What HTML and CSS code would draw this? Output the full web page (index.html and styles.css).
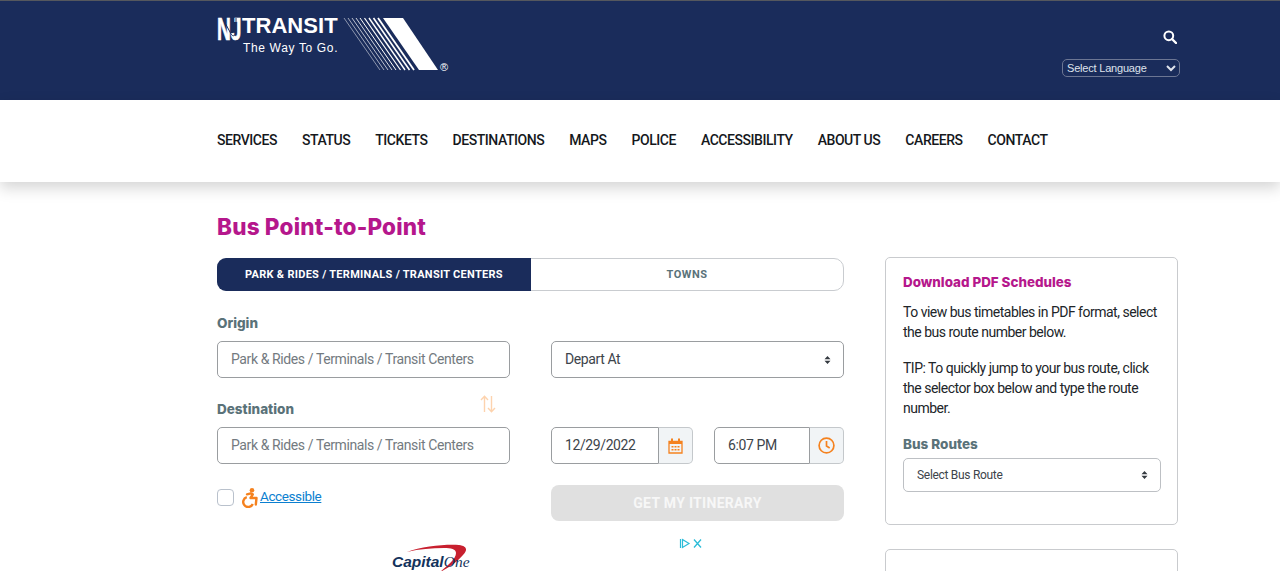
FILE: index.html
```html
<!DOCTYPE html>
<html lang="en">
<head>
<meta charset="utf-8">
<title>Bus Point-to-Point | NJ Transit</title>
<link rel="stylesheet" href="styles.css">
</head>
<body>
<header class="masthead">
  <a class="logo" href="#">
    <span class="logo-text">
      <span class="logo-top">
        <span class="logo-nj">NJ</span>
        <svg class="logo-nj-line" width="25" height="24" viewBox="0 0 25 24"><path fill="none" stroke="#1a2c5b" stroke-width="1" d="M6.500 3l6.500 12c2 5 5 5 6 0V1"/></svg>
        <span class="logo-transit">TRANSIT</span>
      </span>
      <span class="logo-tag">The Way To Go.</span>
    </span>
    <svg class="logo-stripes" width="96" height="54" viewBox="0 0 96 54">
      <g fill="none" stroke="#fff">
        <path stroke-width=".5" d="M1 1 37 53"/>
        <path stroke-width=".6" d="M5 1 41 53"/>
        <path stroke-width=".7" d="M9 1 45 53"/>
        <path stroke-width=".8" d="M13 1 49 53"/>
        <path stroke-width="1" d="M17 1 53 53"/>
        <path stroke-width="1.200" d="M21.500 1 57.500 53"/>
        <path stroke-width="1.400" d="M26 1 62 53"/>
        <path stroke-width="1.600" d="M30.500 1 66.500 53"/>
        <path stroke-width="1.800" d="M35 1 71 53"/>
      </g>
      <path fill="#fff" d="M40 1H60L95 53H76Z"/>
    </svg>
    <span class="logo-reg">®</span>
  </a>
  <div class="tools">
    <svg class="search-icon" width="14" height="14" viewBox="0 0 14 14"><circle cx="5.800" cy="5.800" r="4.400" fill="none" stroke="#fff" stroke-width="2"/><path d="M9 9l4 4" stroke="#fff" stroke-width="2.400" stroke-linecap="round"/></svg>
    <select class="lang"><option>Select Language</option></select>
  </div>
</header>
<nav class="mainnav">
  <a href="#">SERVICES</a><a href="#">STATUS</a><a href="#">TICKETS</a><a href="#">DESTINATIONS</a><a href="#">MAPS</a><a href="#">POLICE</a><a href="#">ACCESSIBILITY</a><a href="#">ABOUT US</a><a href="#">CAREERS</a><a href="#">CONTACT</a>
</nav>
<div class="page">
  <main class="content">
    <h1 class="title">Bus Point-to-Point</h1>
    <div class="tabs">
      <a class="tab tab-on" href="#">PARK &amp; RIDES / TERMINALS / TRANSIT CENTERS</a>
      <a class="tab tab-off" href="#">TOWNS</a>
    </div>
    <form class="trip">
      <div class="field">
        <label class="lbl">Origin</label>
        <input class="ctl" placeholder="Park &amp; Rides / Terminals / Transit Centers">
      </div>
      <div class="field field-end">
        <div class="select-wrap">
          <select class="ctl ctl-select"><option>Depart At</option></select>
          <svg class="caret" width="7" height="10" viewBox="0 0 7 10"><path fill="#343a40" d="M3.500 1 6.500 4.200H.5ZM.5 5.800h6L3.500 9Z"/></svg>
        </div>
      </div>
      <div class="field">
        <div class="lbl-row">
          <label class="lbl">Destination</label>
          <svg class="swap" width="16" height="18" viewBox="0 0 16 18"><path fill="none" stroke="#fdd3ae" stroke-width="1.400" d="M4.500 17V1.500M1 5l3.500-3.800L8 5M11.500 1v15.500M8 13l3.500 3.800L15 13"/></svg>
        </div>
        <input class="ctl" placeholder="Park &amp; Rides / Terminals / Transit Centers">
      </div>
      <div class="field field-end when">
        <div class="group group-date">
          <input class="ctl ctl-join" value="12/29/2022">
          <span class="addon">
            <svg width="15" height="16" viewBox="0 0 15 16"><path fill="none" stroke="#f5821f" stroke-width="1.300" d="M1 3.500h13v11.500H1Z"/><path fill="#f5821f" d="M1 3h13v3H1ZM3 .5h2v3H3ZM10 .5h2v3h-2ZM3.500 8h2v1.500h-2ZM6.500 8h2v1.500h-2ZM9.500 8h2v1.500h-2ZM3.500 11h2v1.500h-2ZM6.500 11h2v1.500h-2ZM9.500 11h2v1.500h-2Z"/></svg>
          </span>
        </div>
        <div class="group group-time">
          <input class="ctl ctl-join" value="6:07 PM">
          <span class="addon">
            <svg width="17" height="17" viewBox="0 0 17 17"><circle cx="8.500" cy="8.500" r="7.400" fill="none" stroke="#f5821f" stroke-width="1.700"/><path fill="none" stroke="#f5821f" stroke-width="1.700" d="M8.500 4v5l3.200 2"/></svg>
          </span>
        </div>
      </div>
      <div class="access">
        <input class="check" type="checkbox">
        <svg class="wheel" width="18" height="20" viewBox="0 0 18 20"><circle cx="11" cy="2.300" r="2.300" fill="#f5821f"/><path fill="none" stroke="#f5821f" stroke-width="2.400" stroke-linejoin="round" stroke-linecap="round" d="M6 6.300 9.800 5.300 11.800 6.300 9.500 10H15.500L14.800 16.500"/><path fill="none" stroke="#f5821f" stroke-width="2.400" d="M5.800 9.200a5 5 0 1 0 6 6.800"/></svg>
        <a class="access-link" href="#">Accessible</a>
      </div>
      <button class="go" type="button" disabled>GET MY ITINERARY</button>
    </form>
    <div class="ad">
      <div class="ad-logo">
        <svg class="swoosh" width="60" height="30" viewBox="0 0 60 30"><path fill="#c8202f" d="M0 8C15 2 40 0 52 1c8 1 9 5 4 10-5 6-14 13-23 17 7-6 16-13 16-19 0-4-5-5-12-5C25 4 12 5 0 8Z"/></svg>
        <span class="ad-cap">Capital</span><span class="ad-one">One</span>
      </div>
      <svg class="ad-choice" width="24" height="11" viewBox="0 0 24 11"><path fill="none" stroke="#2bbcd8" stroke-width="1.200" d="M1.500 1v9M3.500 1.500 10 5.500 3.500 9.500Z"/><path fill="none" stroke="#2bbcd8" stroke-width="1.300" d="M15 1.500l7 8M22 1.500l-7 8"/></svg>
    </div>
  </main>
  <aside class="side">
    <section class="card card-pdf">
      <h2 class="card-title">Download PDF Schedules</h2>
      <p class="card-text">To view bus timetables in PDF format, select the bus route number below.</p>
      <p class="card-text">TIP: To quickly jump to your bus route, click the selector box below and type the route number.</p>
      <label class="lbl lbl-side">Bus Routes</label>
      <div class="select-wrap">
        <select class="ctl ctl-select ctl-small"><option>Select Bus Route</option></select>
        <svg class="caret" width="7" height="10" viewBox="0 0 7 10"><path fill="#343a40" d="M3.500 1 6.500 4.200H.5ZM.5 5.800h6L3.500 9Z"/></svg>
      </div>
    </section>
    <section class="card card-next"></section>
  </aside>
</div>
</body>
</html>
```
FILE: styles.css
```css
* { box-sizing: border-box; }
html, body { height: 100%; margin: 0; overflow: hidden; }
body { background: #fff; font-family: Roboto, "Liberation Sans", sans-serif; color: #212529; }
a { text-decoration: none; color: inherit; }

.masthead { height: 100px; background: #1a2c5b; border-top: 1px solid #55585e; padding: 0 100px 0 217px; display: flex; justify-content: space-between; }
.logo { display: flex; padding-top: 16px; width: 232px; align-items: flex-start; color: #fff; }
.logo-text { display: flex; flex-direction: column; width: 126px; flex: none; }
.logo-top { display: flex; position: relative; font-family: "Liberation Sans", sans-serif; font-weight: 700; line-height: 24px; height: 24px; }
.logo-nj { font-size: 32px; transform: scaleX(.6); transform-origin: left center; width: 25px; white-space: nowrap; -webkit-text-stroke: .7px #fff; }
.logo-nj-line { position: absolute; left: 0; top: 0; }
.logo-transit { font-size: 22px; line-height: 18px; letter-spacing: .05px; }
.logo-tag { font-family: "Liberation Sans", sans-serif; font-size: 12px; letter-spacing: .65px; margin: 0 0 0 26px; line-height: 14px; white-space: nowrap; }
.logo-stripes { flex: none; margin-left: 0; }
.logo-reg { font-size: 11px; line-height: 10px; margin: 45px 0 0 1px; font-family: "Liberation Sans", sans-serif; }

.tools { width: 118px; display: flex; flex-direction: column; align-items: flex-end; padding-top: 29px; }
.search-icon { margin-right: 3px; }
.lang { width: 118px; height: 18px; margin-top: 15px; background: #1a2c5b; color: #dfe3ec; border: 1px solid #6c7693; border-radius: 5px; font: 11px "Liberation Sans", sans-serif; letter-spacing: -.2px; }

.mainnav { height: 82px; padding: 0 0 2px 217px; display: flex; align-items: center; gap: 25px; background: #fff; box-shadow: 0 6px 14px rgba(0,0,0,.17); position: relative; font-size: 14px; letter-spacing: -.45px; font-weight: 500; color: #15181c; }

.page { width: 961px; margin-left: 217px; display: grid; grid-template-columns: 627px 293px; column-gap: 41px; }
.title { margin: 31px 0 17px; font: 800 22.500px/28px Inter, "Open Sans", sans-serif; color: #b5178c; letter-spacing: .2px; }

.tabs { height: 33px; display: grid; grid-template-columns: 314px 313px; border-radius: 10px; border: 1px solid #c9ccd0; }
.tab { display: flex; align-items: center; justify-content: center; font-size: 11px; font-weight: 700; letter-spacing: .28px; color: #5a7279; }
.tab-on { background: #1a2c5b; color: #fff; margin: -1px 0 -1px -1px; border-radius: 9px 0 0 9px; width: 314px; }
.tab-off { padding-right: 3px; letter-spacing: .5px; }

.trip { display: grid; grid-template-columns: 293px 293px; column-gap: 41px; margin-top: 23px; }
.field { margin-bottom: 22px; }
.field-end { display: flex; align-items: flex-end; }
.lbl { display: block; font: 800 13.500px/19px Inter, "Open Sans", sans-serif; color: #5a7279; margin-bottom: 8px; }
.lbl-row { position: relative; }
.swap { position: absolute; right: 14px; top: -5px; }
.ctl { display: block; width: 100%; height: 37px; padding: 0 13px 1px; background: #fff; border: 1px solid #9a9da0; border-radius: 5px; font: 400 14px Roboto, sans-serif; letter-spacing: -.4px; color: #3d444b; outline: 0; }
.ctl::placeholder { color: #737a80; opacity: 1; }
.ctl-select { appearance: none; -webkit-appearance: none; }
.ctl-small { font-size: 12px; letter-spacing: -.3px; height: 34px; padding-bottom: 0; border-color: #bdc0c4; }
.select-wrap { position: relative; width: 100%; }
.caret { position: absolute; right: 13px; top: 50%; margin-top: -5px; }
.when { justify-content: space-between; }
.group { display: flex; height: 37px; }
.group-date { width: 142px; }
.group-time { width: 130px; }
.ctl-join { flex: 1; min-width: 0; border-radius: 5px 0 0 5px; }
.addon { flex: none; width: 34px; display: flex; align-items: center; justify-content: center; background: #f1f4f6; border: 1px solid #c4c8cb; border-left: 0; border-radius: 0 5px 5px 0; }

.access { display: flex; align-items: flex-start; padding-top: 3px; }
.check { appearance: none; -webkit-appearance: none; width: 17px; height: 17px; margin: 0; border: 1px solid #b9c1cc; border-radius: 4px; background: #fff; }
.wheel { margin: -1px 0 0 7px; }
.access-link { font-size: 13.500px; letter-spacing: -.4px; line-height: 15px; color: #0b7fd0; text-decoration: underline; margin-left: 1px; }
.go { height: 36px; margin-top: -1px; border: 0; border-radius: 8px; background: #e0e0e0; color: #f7f7f7; font: 700 14px Roboto, sans-serif; letter-spacing: .3px; }

.ad { display: flex; margin-top: 16px; height: 40px; padding-left: 175px; }
.ad-logo { position: relative; width: 78px; height: 40px; padding-top: 16px; font: italic 700 15.500px/18px "Liberation Sans", sans-serif; color: #13335c; white-space: nowrap; letter-spacing: 0; }
.ad-cap, .ad-one { position: relative; }
.swoosh { position: absolute; left: 15px; top: 7px; }
.ad-one { font: italic 400 15.500px/18px "Liberation Serif", serif; color: #13335c; }
.ad-choice { margin: 1px 0 0 209px; flex: none; }

.side { padding-top: 75px; }
.card { border: 1px solid #c9cbce; border-radius: 5px; padding: 15px 16px 0 17px; }
.card-pdf { height: 268px; }
.card-next { height: 60px; margin-top: 24px; }
.card-title { margin: 0 0 10px; font: 800 13.400px/19px Inter, "Open Sans", sans-serif; color: #b5178c; }
.card-text { margin: 0 0 16px; font-size: 14px; letter-spacing: -.5px; line-height: 20px; color: #212529; }
.lbl-side { margin: 17px 0 4px; }
```
